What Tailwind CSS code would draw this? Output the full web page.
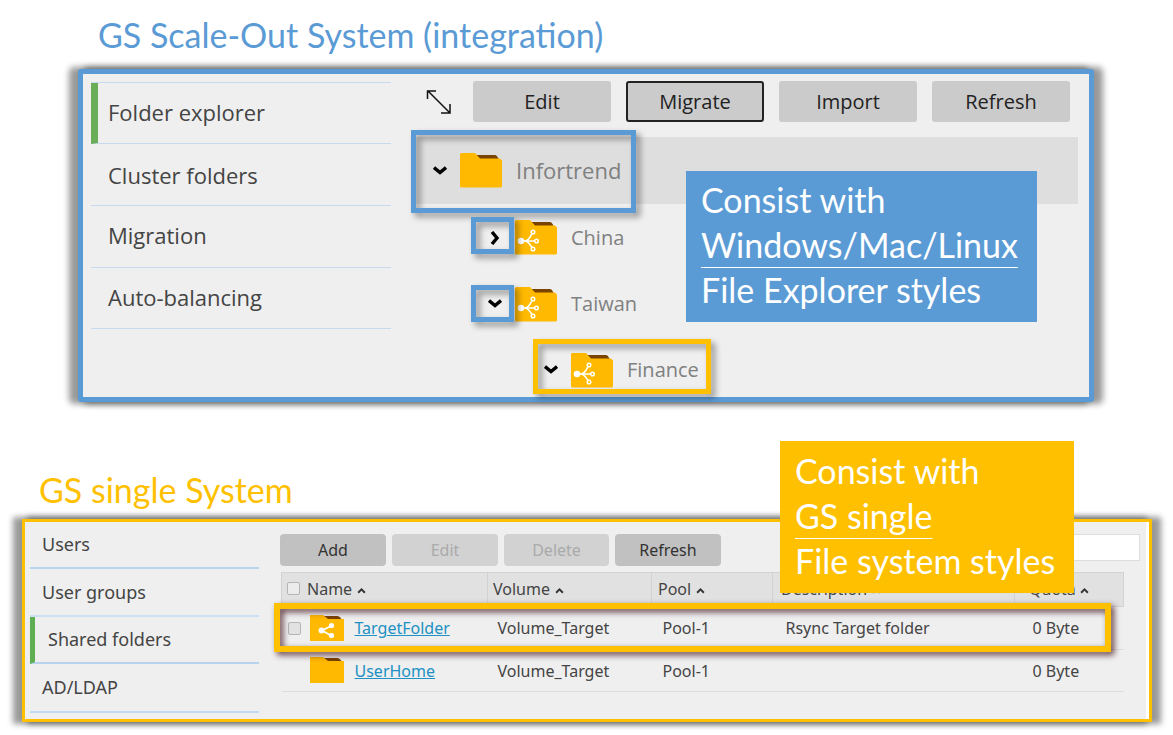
<!DOCTYPE html>
<html lang="en">
<head>
<meta charset="utf-8">
<meta name="viewport" content="width=device-width, initial-scale=1">
<title>GS systems</title>
<script src="https://cdn.jsdelivr.net/npm/@tailwindcss/browser@4"></script>
</head>
<body class="bg-white font-['Lato',sans-serif]">
<svg class="hidden" aria-hidden="true">
  <symbol id="folder" viewBox="0 0 42 35">
    <path d="M15 2h20q2 0 4 5H19z" fill="#7a4300"/>
    <path d="M1 0h14l5 5.500h20l2 2v26l-1 1H1l-1-1V1z" fill="#ffb900"/>
  </symbol>
  <symbol id="cluster-folder" viewBox="0 0 42 35">
    <use href="#folder"/>
    <g fill="none" stroke="#fff" stroke-width="1.500"><path d="M6 21h13M9 21c5 0 6-4 8-7.500M9 21c5 0 6 4 8 6.500"/><circle cx="18" cy="12" r="1.800"/><circle cx="21.500" cy="21" r="1.800"/><circle cx="18" cy="29" r="1.800"/></g>
    <circle cx="6" cy="21" r="3.300" fill="#fff"/>
  </symbol>
  <symbol id="plain-folder" viewBox="0 0 34 27">
    <path d="M13 1h14q3 0 5 4H15z" fill="#7a4300"/>
    <path d="M0 0h13l5 4h16v22H0z" fill="#ffb900"/>
  </symbol>
  <symbol id="share-folder" viewBox="0 0 34 27">
    <use href="#plain-folder"/>
    <path d="M22 10.500l-10 5 10 5.500" fill="none" stroke="#fff" stroke-width="1.800"/>
    <g fill="#fff"><circle cx="21.500" cy="10.500" r="2.600"/><circle cx="11.500" cy="15.500" r="2.900"/><circle cx="21.500" cy="20.500" r="2.600"/></g>
  </symbol>
  <symbol id="down" viewBox="0 0 14 14"><path d="M1 3.500l6 5 6-5" fill="none" stroke="#000" stroke-width="3.400"/></symbol>
  <symbol id="right" viewBox="0 0 14 14"><path d="M4 1l5 6-5 6" fill="none" stroke="#000" stroke-width="3.400"/></symbol>
  <symbol id="sort" viewBox="0 0 8 6"><path d="M1 5l3-3 3 3" fill="none" stroke="#333" stroke-width="1.700"/></symbol>
</svg>

<main class="min-h-screen">
  <section>
    <h1 class="h-[69px] pt-[12px] pl-[98px] text-[34px] leading-[45px] text-[#5b9bd5]">GS Scale-Out System (integration)</h1>
    <div class="relative mr-[79px] ml-[78px] flex rounded-[3px] border-5 border-[#5b9bd5] bg-[#efefef] font-['Open_Sans',sans-serif] shadow-[-7px_0_6px_2px_rgba(0,0,0,0.4),7px_0_6px_2px_rgba(0,0,0,0.4)]">
      <nav class="mt-2 ml-2 w-[300px] shrink-0 text-[22px] text-[#444]">
        <ul class="border-t border-[#c6d9ee]">
          <li><a href="#" class="flex h-[61px] items-center border-b border-l-7 border-b-[#c6d9ee] border-l-[#6aad57] pb-[2px] pl-[10px]">Folder explorer</a></li>
          <li><a href="#" class="flex h-[62px] items-center border-b border-[#c6d9ee] pt-[2px] pl-[17px]">Cluster folders</a></li>
          <li><a href="#" class="flex h-[62px] items-center border-b border-[#c6d9ee] pb-[2px] pl-[17px]">Migration</a></li>
          <li><a href="#" class="flex h-[61px] items-center border-b border-[#c6d9ee] pb-[2px] pl-[17px]">Auto-balancing</a></li>
        </ul>
      </nav>
      <div class="ml-[25px] min-w-0 flex-1">
        <div class="mt-[7px] mb-[15px] flex items-center gap-[15px] pl-[10px] text-[20px] text-[#222]">
          <button type="button" aria-label="Expand" class="mr-[6px]"><svg class="size-[26px]" viewBox="0 0 26 26" fill="none" stroke="#111" stroke-width="1.500"><path d="M2 2l22 22M1.500 10V2H10M24 15v9h-9"/></svg></button>
          <button type="button" class="h-[41px] w-[138px] rounded-[3px] bg-[#cbcbcb]">Edit</button>
          <button type="button" class="h-[41px] w-[138px] rounded-[3px] border-2 border-[#222] bg-[#cbcbcb]">Migrate</button>
          <button type="button" class="h-[41px] w-[138px] rounded-[3px] bg-[#cbcbcb]">Import</button>
          <button type="button" class="h-[41px] w-[138px] rounded-[3px] bg-[#cbcbcb]">Refresh</button>
        </div>
        <ul class="mr-[11px] text-[20px] text-[#808080]">
          <li class="relative flex h-[67px] items-center bg-[#dedede] pl-[17px] text-[22px]">
            <svg class="mr-[13px] size-[14px]"><use href="#down"/></svg>
            <svg class="mr-[14px] h-[35px] w-[42px]"><use href="#folder"/></svg>Infortrend
            <span class="absolute -top-[7px] -left-[5px] h-[83px] w-[225px] border-5 border-[#5b9bd5] drop-shadow-[4px_4px_3px_rgba(0,0,0,0.4)]"></span>
          </li>
          <li class="relative flex h-[67px] items-center pl-[72px]">
            <svg class="mr-[13px] size-[14px]"><use href="#right"/></svg>
            <svg class="mr-[14px] h-[35px] w-[42px]"><use href="#cluster-folder"/></svg>China
            <span class="absolute top-[13px] left-[55px] h-[37px] w-[43px] border-5 border-[#5b9bd5] drop-shadow-[4px_4px_3px_rgba(0,0,0,0.4)]"></span>
          </li>
          <li class="relative flex h-[66px] items-center pl-[72px]">
            <svg class="mr-[13px] size-[14px]"><use href="#down"/></svg>
            <svg class="mr-[14px] h-[35px] w-[42px]"><use href="#cluster-folder"/></svg>Taiwan
            <span class="absolute top-[14px] left-[55px] h-[37px] w-[43px] border-5 border-[#5b9bd5] drop-shadow-[4px_4px_3px_rgba(0,0,0,0.4)]"></span>
          </li>
          <li class="relative flex h-[60px] items-center pt-[6px] pl-[128px]">
            <svg class="mr-[13px] size-[14px]"><use href="#down"/></svg>
            <svg class="mr-[14px] h-[35px] w-[42px]"><use href="#cluster-folder"/></svg>Finance
            <span class="absolute top-[2px] left-[117px] h-[55px] w-[178px] border-5 border-[#ffc000] drop-shadow-[4px_4px_3px_rgba(0,0,0,0.4)]"></span>
          </li>
        </ul>
      </div>
      <p class="absolute top-[97px] right-[52px] h-[151px] w-[351px] bg-[#5b9bd5] pt-[6px] pl-[15px] font-['Lato',sans-serif] text-[34px] leading-[45px] whitespace-nowrap text-white">Consist with<br><span class="underline decoration-1 underline-offset-[9px]">Windows/Mac/Linux</span><br>File Explorer styles</p>
    </div>
  </section>

  <section>
    <h2 class="mt-[65px] mb-[7px] pl-[39px] text-[34px] leading-[45px] text-[#ffc000]">GS single System</h2>
    <div class="relative mr-[21px] ml-[22px] flex border-3 border-[#ffc000] bg-[#efefef] font-['Noto_Sans',sans-serif] text-[16px] text-[#444] shadow-[-7px_0_6px_2px_rgba(0,0,0,0.4),7px_0_6px_2px_rgba(0,0,0,0.4)]">
      <nav class="ml-[5px] w-[229px] shrink-0 pb-[6px] text-[18px]">
        <ul>
          <li><a href="#" class="flex h-[47px] items-center border-b-2 border-[#b8d2f0] pl-[12px]">Users</a></li>
          <li><a href="#" class="flex h-[48px] items-center border-b-2 border-[#cddff2] pl-[12px]">User groups</a></li>
          <li><a href="#" class="flex h-[47px] items-center border-b-2 border-l-5 border-b-[#b8d2f0] border-l-[#5fae50] pl-[13px]">Shared folders</a></li>
          <li><a href="#" class="flex h-[49px] items-center border-b-2 border-[#c2d9f2] pl-[12px]">AD/LDAP</a></li>
        </ul>
      </nav>
      <div class="min-w-0 flex-1 border-r-3 border-white pt-[12px] pr-[6px] pl-[21px]">
        <div class="flex h-[32px] gap-[6px]">
          <button type="button" class="w-[106px] rounded-[4px] bg-[#c1c1c1] text-[#333]">Add</button>
          <button type="button" disabled class="w-[106px] rounded-[4px] bg-[#d2d2d2] text-[#aaa]">Edit</button>
          <button type="button" disabled class="w-[105px] rounded-[4px] bg-[#d2d2d2] text-[#aaa]">Delete</button>
          <button type="button" class="w-[106px] rounded-[4px] bg-[#c1c1c1] text-[#333]">Refresh</button>
          <input type="text" aria-label="Search" class="ml-auto h-[27px] w-[240px] border border-[#ddd] bg-white px-2">
        </div>
        <div class="relative mt-[6px] mr-[16px] ml-px">
          <table class="w-full table-fixed border-collapse text-left">
            <colgroup><col class="w-[206px]"><col class="w-[164px]"><col class="w-[121px]"><col><col class="w-[109px]"></colgroup>
            <thead>
              <tr class="h-[34px] border border-[#d2d2d2] bg-[#e1e1e1]">
                <th class="pb-[2px] font-normal"><span class="flex items-center pl-[5px]"><input type="checkbox" aria-label="Select all" class="mr-[7px] size-[13px] appearance-none rounded-[2px] border border-[#b5b5b5] bg-[#ececec]">Name<svg class="mt-1 ml-[5px] h-[7px] w-[9px]"><use href="#sort"/></svg></span></th>
                <th class="border-l border-[#d2d2d2] pb-[2px] font-normal"><span class="flex items-center pl-[5px]">Volume<svg class="mt-1 ml-[5px] h-[7px] w-[9px]"><use href="#sort"/></svg></span></th>
                <th class="border-l border-[#d2d2d2] pb-[2px] font-normal"><span class="flex items-center pl-[6px]">Pool<svg class="mt-1 ml-[5px] h-[7px] w-[9px]"><use href="#sort"/></svg></span></th>
                <th class="border-l border-[#d2d2d2] pb-[2px] font-normal"><span class="flex items-center pl-[8px]">Description<svg class="mt-1 ml-[5px] h-[7px] w-[9px]"><use href="#sort"/></svg></span></th>
                <th class="border-l border-[#d2d2d2] pb-[2px] font-normal"><span class="flex items-center pl-[14px]">Quota<svg class="mt-1 ml-[4px] h-[7px] w-[9px]"><use href="#sort"/></svg></span></th>
              </tr>
            </thead>
            <tbody>
              <tr class="h-[43px] border-b border-[#ddd]">
                <td><span class="flex items-center pl-[6px]"><input type="checkbox" aria-label="Select TargetFolder" class="mr-[9px] size-[13px] appearance-none rounded-[2px] border border-[#b5b5b5] bg-[#e2e2e2]"><svg class="mr-[11px] h-[27px] w-[34px]"><use href="#share-folder"/></svg><a href="#" class="text-[#2091c4] underline">TargetFolder</a></span></td>
                <td class="pl-[10px]">Volume_Target</td><td class="pl-[11px]">Pool-1</td><td class="pl-[13px]">Rsync Target folder</td><td class="pl-[18px]">0 Byte</td>
              </tr>
              <tr class="h-[42px] border-b border-[#ddd]">
                <td><span class="flex items-center pl-[28px]"><svg class="mr-[11px] h-[27px] w-[34px]"><use href="#plain-folder"/></svg><a href="#" class="text-[#2091c4] underline">UserHome</a></span></td>
                <td class="pl-[10px]">Volume_Target</td><td class="pl-[11px]">Pool-1</td><td></td><td class="pl-[18px]">0 Byte</td>
              </tr>
            </tbody>
          </table>
          <span class="pointer-events-none absolute top-[31px] right-[13px] -left-[7px] h-[49px] border-6 border-[#ffc000] drop-shadow-[3px_3px_3px_rgba(50,0,10,0.75)]"></span>
        </div>
      </div>
      <p class="absolute -top-[81px] right-[75px] h-[152px] w-[294px] bg-[#ffc000] pt-[7px] pl-[15px] font-['Lato',sans-serif] text-[34px] leading-[45px] whitespace-nowrap text-white">Consist with<br><span class="underline decoration-1 underline-offset-[9px]">GS single</span><br>File system styles</p>
    </div>
  </section>
</main>
</body>
</html>
